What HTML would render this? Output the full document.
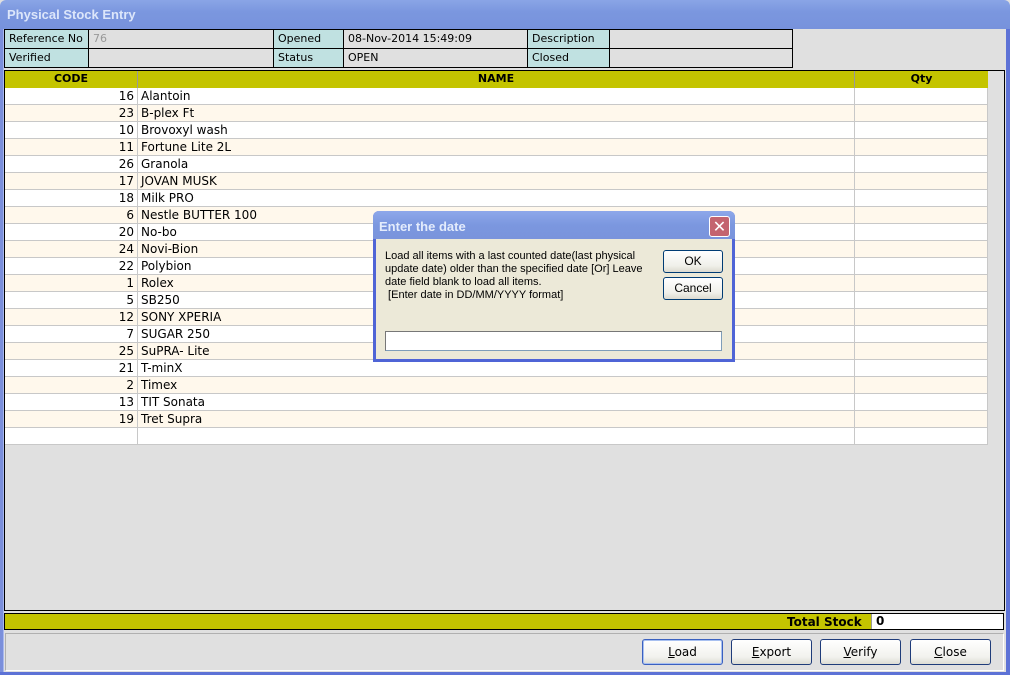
<!DOCTYPE html>
<html><head><meta charset="utf-8"><style>
*{margin:0;padding:0;box-sizing:border-box}
body{width:1010px;height:675px;overflow:hidden;background:#e0e0e0;font-family:"DejaVu Sans","Liberation Sans",sans-serif;font-size:11px;position:relative}
.a{position:absolute}
.title{left:0;top:0;width:1010px;height:29px;background:linear-gradient(#8aa5e6,#7b97df 40%,#7792dc);border-radius:6px 6px 0 0}
.title span{position:absolute;left:7px;top:7px;color:#dce6fa;font-weight:bold;font-size:13px;font-family:"Liberation Sans",sans-serif}
.lb{left:0;top:29px;width:4px;height:646px;background:#7b8fdb;border-right:1px solid #a9b8ee}
.rb{left:1006px;top:29px;width:4px;height:646px;background:#5d72d6}
.bb{left:0;top:672px;width:1010px;height:3px;background:#5d72d6}
.c{position:absolute;border:1px solid #000;padding:1px 4px;line-height:16px;font-size:11px}
.lab{background:#c0e1e1}
.val{background:#e0e0e0}
.grid{left:4px;top:70px;width:1001px;height:541px;border:1px solid #000;background:#e0e0e0}
.hd{position:absolute;top:0;height:17px;background:#c4c400;border-right:1px solid #999;font-weight:bold;text-align:center;line-height:16px;font-size:11px}
.row{position:absolute;left:0;width:983px;height:17px;border-bottom:1px solid #c8c8c8}
.row div{position:absolute;top:0;height:16px;line-height:16px;border-right:1px solid #c8c8c8;font-size:12px}
.btn{position:absolute;top:639px;width:81px;height:26px;border:1px solid #1f3c7a;border-radius:3px;background:linear-gradient(#fff,#f2f2ee 70%,#dcdcd4);text-align:center;line-height:24px;font-size:12px}
.dlg{left:373px;top:211px;width:362px;height:151px;background:#ece9d8;border:3px solid #4f64d6;border-top:none;border-radius:6px 6px 0 0}
.dt{left:373px;top:211px;width:362px;height:28px;background:linear-gradient(#8ea8ea,#7b97df 50%,#7a94dc);border-radius:6px 6px 0 0}
.db{position:absolute;width:60px;height:23px;border:1px solid #003c74;border-radius:3px;background:linear-gradient(#fff,#f0f0ea 70%,#dcdad0);text-align:center;line-height:21px;font-family:"Liberation Sans",sans-serif;font-size:12px}
</style></head><body>
<div class="a title"><span>Physical Stock Entry</span></div>
<div class="a lb"></div><div class="a rb"></div><div class="a bb"></div>

<div class="c lab" style="left:4px;top:29px;width:85px;height:20px">Reference No</div>
<div class="c val" style="left:88px;top:29px;width:186px;height:20px;color:#999">76</div>
<div class="c lab" style="left:273px;top:29px;width:71px;height:20px">Opened</div>
<div class="c val" style="left:343px;top:29px;width:185px;height:20px">08-Nov-2014 15:49:09</div>
<div class="c lab" style="left:527px;top:29px;width:83px;height:20px">Description</div>
<div class="c val" style="left:609px;top:29px;width:184px;height:20px"></div>
<div class="c lab" style="left:4px;top:48px;width:85px;height:20px">Verified</div>
<div class="c val" style="left:88px;top:48px;width:186px;height:20px"></div>
<div class="c lab" style="left:273px;top:48px;width:71px;height:20px">Status</div>
<div class="c val" style="left:343px;top:48px;width:185px;height:20px">OPEN</div>
<div class="c lab" style="left:527px;top:48px;width:83px;height:20px">Closed</div>
<div class="c val" style="left:609px;top:48px;width:184px;height:20px"></div>

<div class="a grid">
<div class="hd" style="left:0;width:133px">CODE</div>
<div class="hd" style="left:133px;width:717px">NAME</div>
<div class="hd" style="left:850px;width:133px;border-right:none">Qty</div>
<div id="rows"></div>
</div>

<div class="a" style="left:4px;top:613px;width:1000px;height:17px;border:1px solid #000;background:#c4c400"></div>
<div class="a" style="left:787px;top:614px;font-weight:bold;font-size:12px;line-height:16px">Total Stock</div>
<div class="a" style="left:871px;top:614px;width:132px;height:15px;background:#fff;border-left:1px solid #999;padding-left:4px;font-weight:bold;line-height:15px;font-size:12px">0</div>
<div class="a" style="left:5px;top:633px;width:999px;height:38px;border:1px solid #b0b0b0;border-right-color:#fff;border-bottom-color:#fff"></div>
<div class="btn" style="left:642px;border-color:#3a60c0;box-shadow:inset 0 0 0 1px #a8c0f0"><u>L</u>oad</div>
<div class="btn" style="left:731px"><u>E</u>xport</div>
<div class="btn" style="left:820px"><u>V</u>erify</div>
<div class="btn" style="left:910px"><u>C</u>lose</div>

<div class="a dlg"></div>
<div class="a dt"><span style="position:absolute;left:6px;top:8px;color:#e4ecfc;font-weight:bold;font-size:13px;font-family:'Liberation Sans',sans-serif">Enter the date</span>
<div style="position:absolute;left:336px;top:5px;width:21px;height:21px;border:1px solid #fff;border-radius:3px;background:#c4646f;color:#fff;text-align:center;line-height:19px;font-size:16px;font-weight:bold;font-family:'DejaVu Sans',sans-serif">✕</div></div>
<div class="a" style="left:385px;top:250px;width:270px;font-family:'Liberation Sans',sans-serif;font-size:11px;line-height:13px">Load all items with a last counted date(last physical update date) older than the specified date [Or] Leave date field blank to load all items.<br>&nbsp;[Enter date in DD/MM/YYYY format]</div>
<div class="db" style="left:663px;top:250px">OK</div>
<div class="db" style="left:663px;top:277px">Cancel</div>
<div class="a" style="left:385px;top:331px;width:337px;height:20px;background:#fff;border:1px solid #7f9db9;border-top-color:#777;border-left-color:#777"></div>

<script>
var d=[[16,"Alantoin"],[23,"B-plex Ft"],[10,"Brovoxyl wash"],[11,"Fortune Lite 2L"],[26,"Granola"],[17,"JOVAN MUSK"],[18,"Milk PRO"],[6,"Nestle BUTTER 100"],[20,"No-bo"],[24,"Novi-Bion"],[22,"Polybion"],[1,"Rolex"],[5,"SB250"],[12,"SONY XPERIA"],[7,"SUGAR 250"],[25,"SuPRA- Lite"],[21,"T-minX"],[2,"Timex"],[13,"TIT Sonata"],[19,"Tret Supra"],["",""]];
var h="";d.forEach(function(r,i){h+='<div class="row" style="top:'+(17+i*17)+'px;background:'+(i%2?'#fff8ec':'#fff')+'"><div style="left:0;width:133px;text-align:right;padding-right:3px">'+r[0]+'</div><div style="left:133px;width:717px;padding-left:3px">'+r[1]+'</div><div style="left:850px;width:133px"></div></div>';});
document.getElementById("rows").innerHTML=h;
</script>
</body></html>
